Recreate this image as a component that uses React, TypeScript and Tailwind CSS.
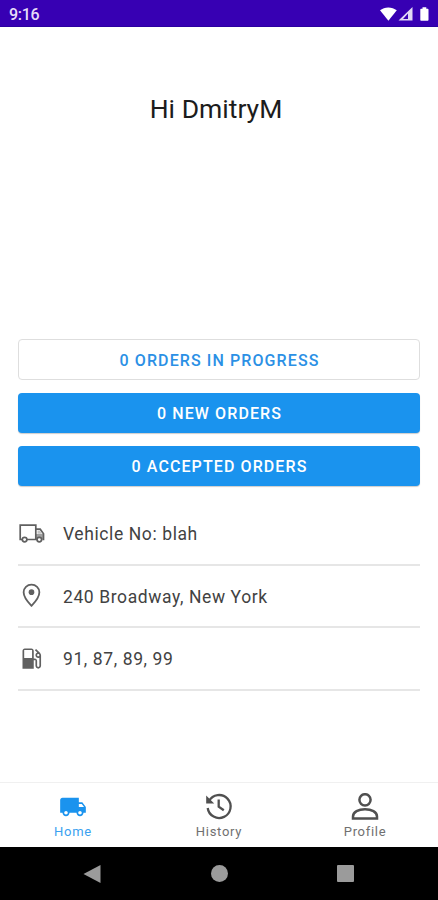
import React from 'react';

type IconProps = { className?: string };

const TruckOutlineIcon: React.FC<IconProps> = ({ className }) => (
  <svg viewBox="0 0 27 27" fill="none" stroke="currentColor" strokeWidth="1.7" className={className}>
    <path d="M4 19.500H2.200V5.200h15.600v14.300H9" />
    <path d="M17.800 9.200h4.400l3.300 4.500v5.800h-1" />
    <path d="M19.500 10.500h2.300l2.200 3.300h-4.500z" fill="#c5c5c5" stroke="none" />
    <path d="M18 14h7.500v5.500H18z" fill="currentColor" fillOpacity="0.6" stroke="none" />
    <circle cx="6.600" cy="19.600" r="2.300" fill="white" />
    <circle cx="21.300" cy="19.600" r="2.300" fill="white" />
  </svg>
);

const TruckIcon: React.FC<IconProps> = ({ className }) => (
  <svg viewBox="0 0 24 24" fill="currentColor" className={className}>
    <path d="M20 8h-3V4H3c-1.1 0-2 .9-2 2v11h2c0 1.66 1.34 3 3 3s3-1.34 3-3h6c0 1.66 1.34 3 3 3s3-1.34 3-3h2v-5l-3-4zM6 18.500c-.83 0-1.500-.67-1.500-1.500s.67-1.500 1.500-1.500 1.500.67 1.500 1.500-.67 1.500-1.500 1.500zm13.500-9 1.960 2.500H17V9.500h2.500zm-1.500 9c-.83 0-1.500-.67-1.500-1.500s.67-1.500 1.500-1.500 1.500.67 1.500 1.500-.67 1.500-1.500 1.500z" />
  </svg>
);

const PinIcon: React.FC<IconProps> = ({ className }) => (
  <svg viewBox="0 0 24 24" fill="none" stroke="currentColor" strokeWidth="1.6" className={className}>
    <path d="M12 2.400C8.100 2.400 5 5.400 5 9.200c0 5 7 12 7 12s7-7 7-12c0-3.800-3.100-6.800-7-6.800z" />
    <circle cx="12" cy="9" r="2.500" fill="currentColor" stroke="none" />
  </svg>
);

const FuelIcon: React.FC<IconProps> = ({ className }) => (
  <svg viewBox="0 0 24 24" fill="currentColor" className={className}>
    <path d="M19.770 7.230l.01-.01-3.720-3.720L15 4.560l2.110 2.110c-.94.36-1.610 1.260-1.610 2.330 0 1.380 1.120 2.500 2.500 2.500.36 0 .69-.08 1-.21v7.210c0 .55-.45 1-1 1s-1-.45-1-1V14c0-1.100-.9-2-2-2h-1V5c0-1.100-.9-2-2-2H6c-1.100 0-2 .9-2 2v16h10v-7.500h1.500v5c0 1.380 1.120 2.500 2.500 2.500s2.500-1.120 2.500-2.500V9c0-.69-.28-1.320-.73-1.770zM12.500 11.500h-7v-7h7v7zm5.500-1.500c-.55 0-1-.45-1-1s.45-1 1-1 1 .45 1 1-.45 1-1 1z" />
  </svg>
);

const HistoryIcon: React.FC<IconProps> = ({ className }) => (
  <svg viewBox="0 0 28 28" fill="none" stroke="currentColor" strokeWidth="2.3" className={className}>
    <path d="M4 8A11.500 11.500 0 1 1 2.700 15" />
    <path d="M1.200 2.500v8h8z" fill="currentColor" stroke="none" />
    <path d="M13.700 6.500V13.700L18.800 17.300" />
  </svg>
);

const ProfileIcon: React.FC<IconProps> = ({ className }) => (
  <svg viewBox="0 0 28 28" fill="none" stroke="currentColor" strokeWidth="2.500" className={className}>
    <circle cx="14" cy="6.800" r="5.600" />
    <path d="M2 25.600v-2.100c0-4.500 5.500-7.200 12-7.200s12 2.700 12 7.200v2.100z" />
  </svg>
);

const StatusBar = () => (
  <div className="flex h-[27px] items-center justify-between border-b border-[#2b00a0] bg-[#3700b3] pr-2 pl-[9px] text-white">
    <span className="pt-[3px] text-[16px] leading-none font-medium tracking-[-0.3px] text-[#e6dcf8]">9:16</span>
    <svg viewBox="0 0 50 16" fill="currentColor" className="mt-0.5 h-4 w-[50px]">
      <path d="M0 4.300C4.500.4 12 .4 16.800 4.300L8.400 14.800z" />
      <path d="M32.500 1v13.500H18.500zM28 7.500 23 13h5z" fillRule="evenodd" fillOpacity="0.85" />
      <path d="M42.500 1.200h3.800v1.500h1.200c.7 0 1 .4 1 1v10c0 .7-.4 1-1 1h-6.200c-.6 0-1-.4-1-1v-10c0-.6.4-1 1-1h1.200z" />
    </svg>
  </div>
);

const details = [
  { label: 'Vehicle No: blah', Icon: TruckOutlineIcon },
  { label: '240 Broadway, New York', Icon: PinIcon },
  { label: '91, 87, 89, 99', Icon: FuelIcon },
];

const tabs = [
  { label: 'Home', Icon: TruckIcon, active: true },
  { label: 'History', Icon: HistoryIcon, active: false },
  { label: 'Profile', Icon: ProfileIcon, active: false },
];

export default function App() {
  return (
    <div className="flex h-[900px] w-[438px] flex-col overflow-hidden bg-white font-['Roboto',sans-serif]">
      <StatusBar />

      <main className="flex flex-1 flex-col px-[18px]">
        <h1 className="mt-[66px] pr-1.5 text-center text-[26.500px] leading-8 text-[#1c1c1c]">
          Hi DmitryM
        </h1>

        <div className="mt-[214px] flex flex-col gap-[13px] text-[16px] font-medium tracking-[1.1px]">
          <button className="h-[41px] rounded-[4px] border border-[#dedede] pt-0.5 pl-px text-[#2b90e5]">
            0 ORDERS IN PROGRESS
          </button>
          <button className="h-10 rounded-[4px] bg-[#1a93ee] pt-px pl-px text-white shadow-[0_1px_1px_#0003]">
            0 NEW ORDERS
          </button>
          <button className="h-10 rounded-[4px] bg-[#1a93ee] pt-0.5 pl-px text-white shadow-[0_1px_1px_#0003]">
            0 ACCEPTED ORDERS
          </button>
        </div>

        <ul className="mt-[17px]">
          {details.map(({ label, Icon }) => (
            <li
              key={label}
              className="flex h-[62.500px] items-center border-b-2 border-[#e6e6e6] text-[17.500px] tracking-[0.6px] text-[#424242]"
            >
              <Icon className="mr-[18px] size-[27px] text-[#606060]" />
              <span className="pt-0.5">{label}</span>
            </li>
          ))}
        </ul>
      </main>

      <nav className="grid h-[65px] grid-cols-3 border-t border-[#f0f0f0]">
        {tabs.map(({ label, Icon, active }) => (
          <div
            key={label}
            className={`flex flex-col items-center pt-2.5 ${active ? 'text-[#1a93ee]' : 'text-[#505050]'}`}
          >
            <Icon className="size-7" />
            <span className={`mt-[3px] text-[13px] leading-4 tracking-[0.7px] ${active ? 'text-[#3ba1f0]' : 'text-[#707070]'}`}>
              {label}
            </span>
          </div>
        ))}
      </nav>

      <div className="flex h-[53px] items-center justify-between bg-black pr-[84px] pl-[83px]">
        <svg viewBox="0 0 18 18" className="size-[18px]">
          <path d="M17.500 0v18L.5 9z" fill="#9b9b9b" />
        </svg>
        <div className="size-[17px] rounded-full bg-[#9b9b9b]" />
        <div className="size-[17px] rounded-[1px] bg-[#9b9b9b]" />
      </div>
    </div>
  );
}
